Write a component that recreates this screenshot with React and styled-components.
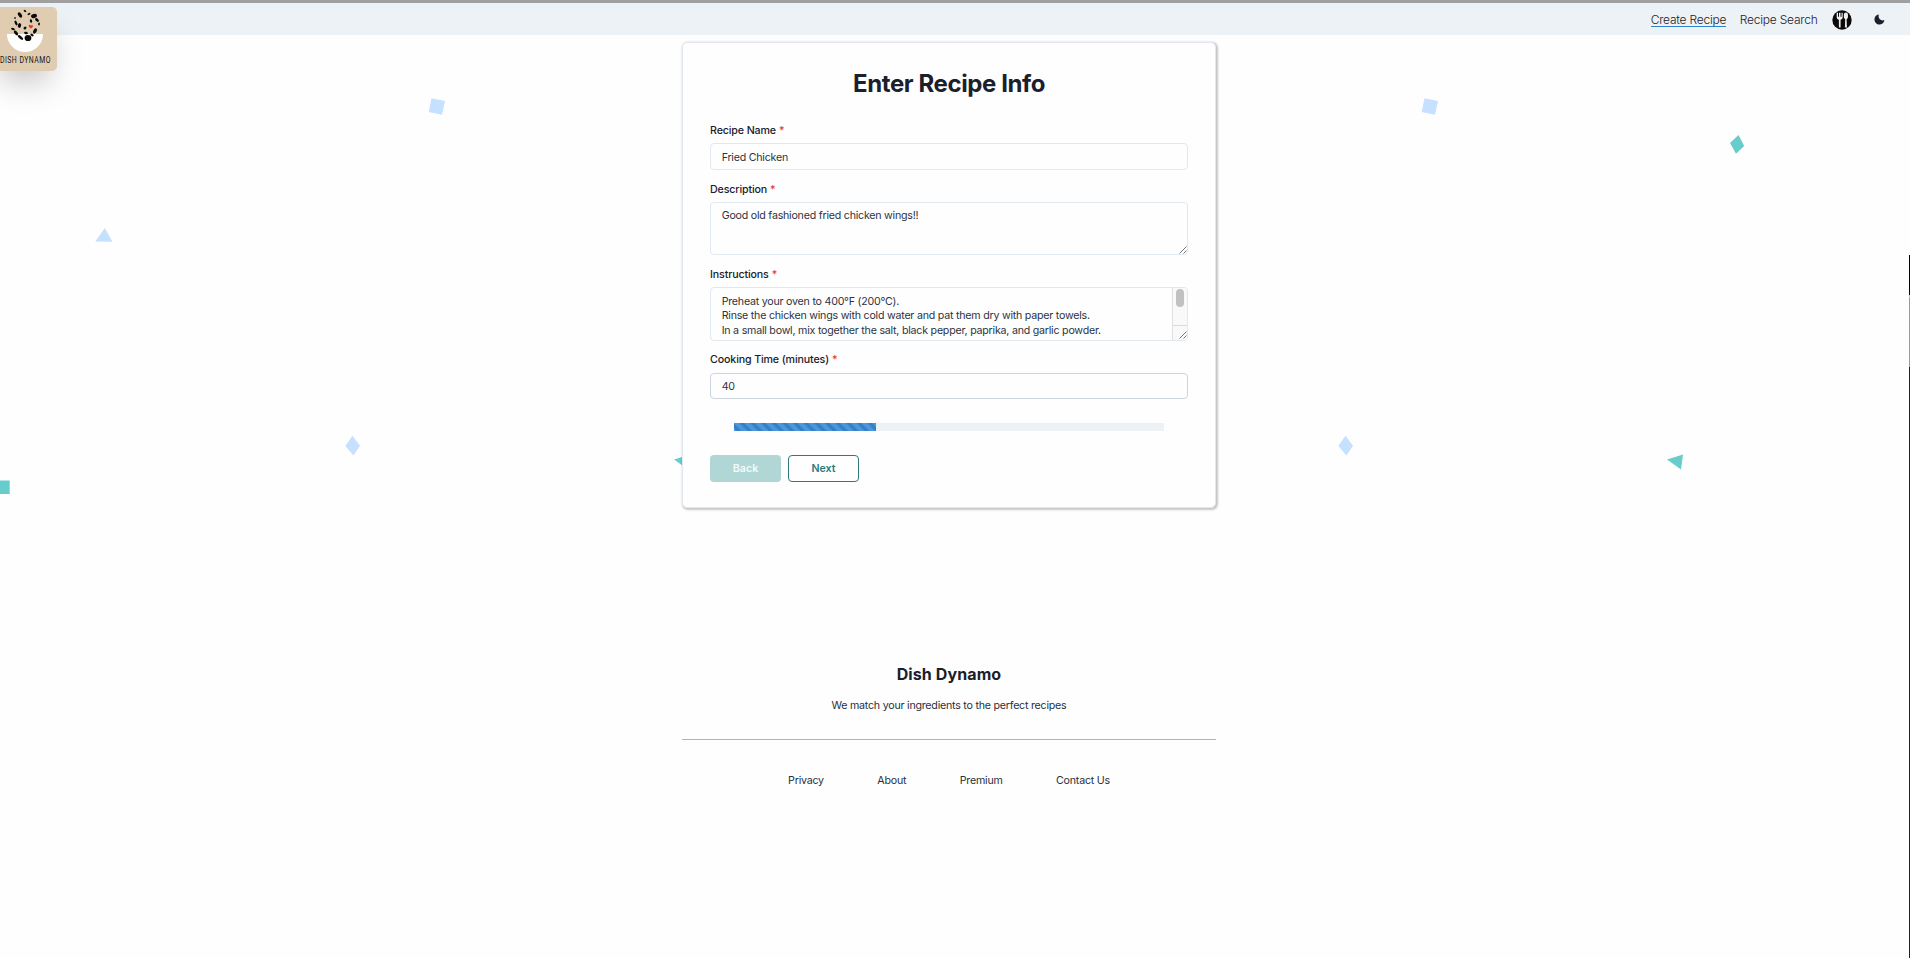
import React from "react";
import styled, { createGlobalStyle, css } from "styled-components";

const GlobalStyle = createGlobalStyle`
  * { box-sizing: border-box; }
  body {
    margin: 0;
    background: #fefefe;
    color: #1a202c;
    font-family: Inter, "Liberation Sans", sans-serif;
    font-size: 10.67px;
    line-height: 16px;
    letter-spacing: -0.23px;
    overflow: hidden;
  }
`;

const Page = styled.div`
  position: relative;
  height: 958px;
  overflow: hidden;
  display: flex;
  flex-direction: column;
  align-items: center;
`;

const Nav = styled.nav`
  width: 100%;
  height: 35px;
  flex: none;
  display: flex;
  align-items: center;
  justify-content: flex-end;
  padding-right: 25px;
  background: #edf2f7;
  border-top: 3px solid #a0a0a0;
`;

const NavLink = styled.a`
  padding-top: 2px;
  font-size: 12px;
  line-height: 12px;
  font-weight: 300;
  letter-spacing: -0.22px;
  margin-right: 13.5px;
  border-bottom: 1px solid ${(p) => (p.$active ? "#3182ce" : "transparent")};
`;

const Avatar = styled.svg`
  width: 20px;
  height: 20px;
  margin: 2px 22px 0 1px;
`;

const Moon = styled.svg`
  width: 11px;
  height: 11px;
`;

const Logo = styled.svg`
  position: absolute;
  left: -7px;
  top: 7px;
  width: 64px;
  height: 64px;
  border-radius: 5px;
  background: #dfccb1;
  box-shadow: 0 17px 33px -8px rgba(0, 0, 0, 0.25);
`;

const Backdrop = styled.svg`
  position: absolute;
  inset: 0;
  width: 1910px;
  height: 958px;
  pointer-events: none;
`;

const Card = styled.form`
  position: relative;
  width: 534px;
  height: 466px;
  flex: none;
  margin: 7px 0 0 -12px;
  padding: 24px 27px 0;
  background: #fefefe;
  border: 1px solid #e2e8f0;
  border-radius: 5px;
  box-shadow: 1px 1px 2px 1px rgba(0, 0, 0, 0.22);
`;

const Title = styled.h1`
  margin: 0 0 23px;
  font-size: 24px;
  line-height: 34px;
  font-weight: 700;
  letter-spacing: -0.4px;
  text-align: center;
`;

const Field = styled.div`
  display: flex;
  flex-direction: column;
  height: ${(p) => p.$height}px;
`;

const Label = styled.label`
  height: 13px;
  margin-bottom: ${(p) => p.$gap || 6}px;
  line-height: 13px;
  font-weight: 500;
  letter-spacing: -0.13px;
`;

const Required = styled.span`
  margin-left: 3px;
  color: #e53e3e;
`;

const control = css`
  display: block;
  width: 478px;
  margin: 0;
  padding: 0 10.67px;
  border: 1px solid ${(p) => (p.$hover ? "#cbd5e0" : "#e2e8f0")};
  border-radius: 4px;
  background: #fefefe;
  color: #2d333f;
  font: inherit;
  letter-spacing: inherit;
  outline: none;
`;

const Input = styled.input`
  ${control}
  height: ${(p) => p.$height}px;
  padding-top: ${(p) => p.$top || 0}px;
`;

const AreaWrap = styled.div`
  position: relative;
  height: 53px;
`;

const Area = styled.textarea`
  ${control}
  height: ${(p) => p.$height}px;
  padding-top: ${(p) => p.$top}px;
  line-height: 14.67px;
  resize: none;
  overflow: hidden;
`;

const Grip = styled.svg`
  position: absolute;
  right: 1px;
  bottom: 1px;
  width: 8px;
  height: 8px;
`;

const Scrollbar = styled.div`
  position: absolute;
  top: 1px;
  right: 1px;
  width: 15px;
  height: 52px;
  border-left: 1px solid #e0e0e0;
  border-radius: 0 3px 3px 0;
  background: #f9f9f9;
`;

const Thumb = styled.div`
  width: 8px;
  height: 18px;
  margin: 1px 0 0 3px;
  border-radius: 4px;
  background: #c1c1c1;
`;

const Corner = styled.div`
  height: 15px;
  margin-top: 18px;
  border-top: 1px solid #dadada;
`;

const Progress = styled.div`
  width: 430px;
  height: 8px;
  margin: 0 0 24px 24px;
  background: #edf2f7;
`;

const ProgressFill = styled.div`
  width: 33%;
  height: 100%;
  background-color: #3182ce;
  background-image: linear-gradient(
    45deg,
    rgba(255, 255, 255, 0.15) 25%,
    transparent 25%,
    transparent 50%,
    rgba(255, 255, 255, 0.15) 50%,
    rgba(255, 255, 255, 0.15) 75%,
    transparent 75%,
    transparent
  );
  background-size: 10.67px 10.67px;
`;

const Buttons = styled.div`
  display: flex;
  gap: 7px;
`;

const Button = styled.button`
  width: 71px;
  height: 27px;
  padding: 0;
  border: ${(p) => (p.$solid ? "0" : "1px solid #2c7a7b")};
  border-radius: 4px;
  background: ${(p) => (p.$solid ? "#b0d7d5" : "transparent")};
  color: ${(p) => (p.$solid ? "#f4fafa" : "#2c7a7b")};
  font: 600 10.67px/16px Inter, sans-serif;
`;

const Footer = styled.footer`
  width: 534px;
  margin: 155px 0 0 -12px;
  text-align: center;
`;

const Brand = styled.h2`
  margin: 0;
  font-size: 16px;
  line-height: 22px;
  font-weight: 700;
  letter-spacing: 0.1px;
`;

const Tagline = styled.p`
  margin: 13px 0 25px;
  color: #2a303c;
`;

const FooterLinks = styled.div`
  display: flex;
  justify-content: center;
  gap: 53.5px;
  padding-top: 33px;
  border-top: 1px solid #b2b4b7;
  color: #2a303c;
`;

const Edge = styled.div`
  position: absolute;
  right: 0;
  top: 255px;
  bottom: 0;
  width: 1px;
  background: linear-gradient(#000 40px, #b8c4cc 40px, #b8c4cc 43px, #999 43px, #999 112px, #222 112px);
`;

const GripMark = () => (
  <Grip viewBox="0 0 8 8">
    <path d="M0.5 7.5 7.5 0.5M4.5 7.5 7.5 4.5" stroke="#555" strokeWidth="0.8" />
  </Grip>
);

const FormLabel = ({ children, gap }) => (
  <Label $gap={gap}>
    {children}
    <Required>*</Required>
  </Label>
);

const seeds = [
  [25, 5, 1.4, 1, 30], [20, 9, 2.9, 1.7, 55], [16, 17, 2.6, 1.2, 65], [29, 8, 1.6, 1, -30],
  [34, 10, 3, 2, -15], [37, 14, 2.2, 1.4, 40], [13, 23, 2, 1.1, 20], [19.5, 19.5, 1.6, 2.4, 15],
  [25, 22, 1.7, 1.2, -40], [31, 15, 1.8, 1.1, 70], [35, 25, 2.8, 1.7, -60], [26, 27, 2, 1.2, 15],
  [16, 27, 2.8, 1.5, 50], [20.5, 31.5, 3.2, 1.3, 40], [28, 32, 3.4, 3.1, 0], [15, 12, 1.2, 0.8, 0],
  [32, 29, 1.8, 1.1, 30], [39, 18, 0.9, 1.4, 10],
];

const instructions = `Preheat your oven to 400°F (200°C).
Rinse the chicken wings with cold water and pat them dry with paper towels.
In a small bowl, mix together the salt, black pepper, paprika, and garlic powder.`;

export default function App() {
  return (
    <Page>
      <GlobalStyle />
      <Backdrop viewBox="0 0 1910 958">
        <g fill="#c6e0ff">
          <path d="M431.5 98.3 445 101 442 114.7 428.7 112Z" />
          <path d="M1424.5 98.3 1438 101 1435 114.7 1421.7 112Z" />
          <path d="M104.8 228 112.5 241.8 95.3 241.6Z" />
          <path d="M352.5 435.8 360 445.8 353.5 455.5 345.3 446Z" />
          <path d="M1345.5 435.8 1353 445.8 1346.5 455.5 1338.3 446Z" />
        </g>
        <g fill="#66cdcc">
          <path d="M1738.5 135 1744.2 146 1736 153.8 1730 143Z" />
          <path d="M0 480.5H9.7V494H0Z" />
          <path d="M674 459.5 690 454.5 688 469.5Z" />
          <path d="M1667 459.5 1683 454.5 1681 469.5Z" />
        </g>
      </Backdrop>

      <Nav>
        <NavLink $active>Create Recipe</NavLink>
        <NavLink>Recipe Search</NavLink>
        <Avatar viewBox="0 0 20 20">
          <circle cx="10" cy="10" r="9.7" fill="#0b0a0a" />
          <path d="M4.7 2.8v4.4q0 2.2 2.2 2.6V17.5h1.7V9.8q2.1-.4 2.1-2.6V2.8H9.5v4h-1v-4H7v4H6v-4Z" fill="#eee" />
          <ellipse cx="13.9" cy="5.9" rx="2.1" ry="3.3" fill="#eee" />
          <path d="M13.2 8.5h1.4l.3 9h-2Z" fill="#eee" />
        </Avatar>
        <Moon viewBox="0 0 24 24">
          <path
            d="M21.4,13.7C20.6,13.9,19.8,14,19,14c-5,0-9-4-9-9c0-0.8,0.1-1.6,0.3-2.4c0.1-0.3,0-0.7-0.3-1c-0.3-0.3-0.6-0.4-1-0.3C4.3,2.7,1,7.1,1,12c0,6.1,4.9,11,11,11c4.9,0,9.3-3.3,10.6-8.1c0.1-0.3,0-0.7-0.3-1C22.1,13.7,21.7,13.6,21.4,13.7z"
            fill="#1a202c"
          />
        </Moon>
      </Nav>

      <Logo viewBox="0 0 64 64">
        <path d="M14 27H50A18 18 0 0 1 14 27Z" fill="#fff" />
        <g transform="translate(7 -1)">
          {seeds.map(([x, y, rx, ry, a], i) => (
            <ellipse key={i} cx={x} cy={y} rx={rx} ry={ry} transform={`rotate(${a} ${x} ${y})`} fill="#0c0b09" />
          ))}
          <path d="M28.6 19.5q1-1.5 2.3 0 1.5-1.2 2.2.3-.1 1.6-2.2 2.8-2.3-1-2.3-3.1Z" fill="#f3352c" />
        </g>
        <text
          transform="translate(7 55.8) scale(0.75 1)"
          textLength="67"
          lengthAdjust="spacing"
          fontFamily="Roboto, sans-serif"
          fontSize="9.2"
          fill="#17140f"
        >
          DISH DYNAMO
        </text>
      </Logo>

      <Card>
        <Title>Enter Recipe Info</Title>
        <Field $height={59}>
          <FormLabel>Recipe Name</FormLabel>
          <Input $height={27} $top={1.5} readOnly value="Fried Chicken" />
        </Field>
        <Field $height={85}>
          <FormLabel>Description</FormLabel>
          <AreaWrap>
            <Area $height={53} $top={6.2} readOnly value="Good old fashioned fried chicken wings!!" />
            <GripMark />
          </AreaWrap>
        </Field>
        <Field $height={85}>
          <FormLabel>Instructions</FormLabel>
          <AreaWrap>
            <Area $height={54} $top={6.5} readOnly value={instructions} />
            <Scrollbar>
              <Thumb />
              <Corner />
            </Scrollbar>
            <GripMark />
          </AreaWrap>
        </Field>
        <Field $height={70}>
          <FormLabel gap={7}>Cooking Time (minutes)</FormLabel>
          <Input $height={26} $hover readOnly value="40" />
        </Field>
        <Progress>
          <ProgressFill />
        </Progress>
        <Buttons>
          <Button type="button" $solid>Back</Button>
          <Button type="button">Next</Button>
        </Buttons>
      </Card>

      <Footer>
        <Brand>Dish Dynamo</Brand>
        <Tagline>We match your ingredients to the perfect recipes</Tagline>
        <FooterLinks>
          <span>Privacy</span>
          <span>About</span>
          <span>Premium</span>
          <span>Contact Us</span>
        </FooterLinks>
      </Footer>
      <Edge />
    </Page>
  );
}
